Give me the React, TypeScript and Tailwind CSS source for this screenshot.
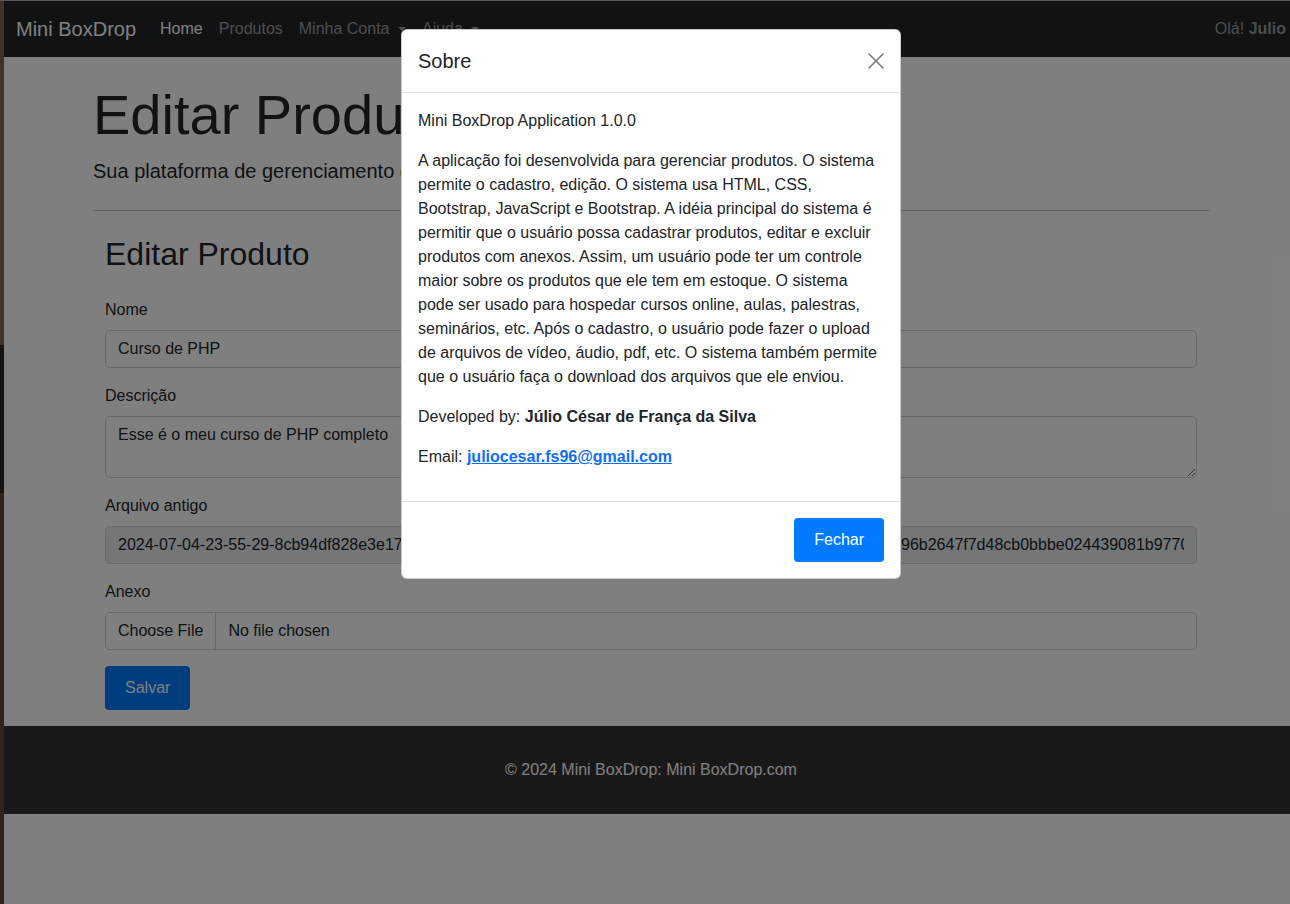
import React from "react";

const hiddenHash =
  "0a4e2b9d71e83b5d0a6e29b4d7e1a08b3d5e92a7b4e6d1038ae5b7d";
const oldFile =
  "2024-07-04-23-55-29-8cb94df828e3e17" +
  hiddenHash +
  "596b2647f7d48cb0bbbe024439081b97701a2b3c4d.pdf";

function Caret() {
  return (
    <span className="inline-block w-0 h-0 ml-[4px] align-[3px] border-x-[4.8px] border-x-transparent border-t-[4.8px] border-t-current" />
  );
}

function Label({ children }: { children: React.ReactNode }) {
  return <label className="block mb-2 leading-6 text-[16px] text-[#212529]">{children}</label>;
}

export default function App() {
  const inputCls =
    "block w-full h-[38px] px-3 py-[6px] text-[16px] leading-6 text-[#212529] bg-white border border-[#ced4da] rounded-[5px] outline-none";
  return (
    <div className="w-[1290px] h-[904px] overflow-hidden flex flex-col font-['Liberation_Sans',Arial,sans-serif] bg-[#808080]">
      <div className="h-px shrink-0 bg-[#5a5a5a]" />
      <div className="flex flex-1 min-h-0">
        <div className="w-[4px] shrink-0 flex flex-col">
          <div className="h-[344px] bg-[#3f3229]" />
          <div className="h-[148px] bg-[#161310]" />
          <div className="flex-1 bg-[#2e241d]" />
        </div>
        <div className="relative w-[1294px] shrink-0 bg-white flex flex-col">
          {/* Navbar */}
          <nav className="h-[56px] shrink-0 bg-[#212529] flex items-center px-3">
            <span className="text-[20px] leading-[30px] text-white mr-4">Mini BoxDrop</span>
            <ul className="flex items-center text-[16px] leading-6">
              <li className="px-2 text-white">Home</li>
              <li className="px-2 text-[rgba(255,255,255,0.55)]">Produtos</li>
              <li className="px-2 text-[rgba(255,255,255,0.55)]">
                Minha Conta <Caret />
              </li>
              <li className="px-2 text-[rgba(255,255,255,0.55)]">
                Ajuda <Caret />
              </li>
            </ul>
            <span className="ml-auto text-[16px] text-[rgba(255,255,255,0.55)]">
              Olá! <strong className="font-bold">Julio</strong>
            </span>
          </nav>

          {/* Main */}
          <main className="w-[1140px] mx-auto px-3 shrink-0">
            <h1 className="mt-[24px] mb-2 text-[56px] leading-[1.2] font-light text-[#212529]">
              Editar Produto
            </h1>
            <p className="text-[20px] leading-[30px] font-light text-[#212529]">
              Sua plataforma de gerenciamento de produtos.
            </p>
            <hr className="my-6 border-0 border-t border-[#bfbfbf]" />
            <div className="px-3">
              <h2 className="text-[32px] leading-[1.2] text-[#212529] mb-[24px]">Editar Produto</h2>
              <div className="mb-4">
                <Label>Nome</Label>
                <input className={inputCls} readOnly value="Curso de PHP" />
              </div>
              <div className="mb-4">
                <Label>Descrição</Label>
                <textarea
                  className="block w-full h-[62px] px-3 py-[6px] text-[16px] leading-6 text-[#212529] bg-white border border-[#ced4da] rounded-[5px] outline-none"
                  rows={2}
                  readOnly
                  value="Esse é o meu curso de PHP completo"
                />
              </div>
              <div className="mb-4">
                <Label>Arquivo antigo</Label>
                <input
                  className="block w-full h-[38px] px-3 py-[6px] text-[16px] leading-6 text-[#212529] bg-[#e9ecef] border border-[#ced4da] rounded-[5px] outline-none"
                  readOnly
                  value={oldFile}
                />
              </div>
              <div className="mb-4">
                <Label>Anexo</Label>
                <div className="flex items-stretch h-[38px] border border-[#ced4da] rounded-[5px] bg-white text-[16px] leading-6 text-[#212529]">
                  <span className="flex items-center px-3 border-r border-[#ced4da]">Choose File</span>
                  <span className="flex items-center px-3">No file chosen</span>
                </div>
              </div>
              <button className="h-[44px] px-5 rounded-[4px] bg-[#007bff] text-white text-[16px]">Salvar</button>
            </div>
          </main>

          {/* Footer */}
          <footer className="mt-[16px] h-[88px] shrink-0 bg-[#333333] flex items-center justify-center text-white text-[16px]">
            © 2024 Mini BoxDrop: Mini BoxDrop.com
          </footer>
          <div className="flex-1" />

          {/* Modal backdrop */}
          <div className="absolute inset-0 bg-black/50">
            <div className="mx-auto mt-[28px] w-[500px] bg-white rounded-[6px] border border-black/20 text-[#212529]">
              <div className="flex items-center justify-between p-4 border-b border-[#dee2e6]">
                <h5 className="text-[20px] leading-[30px] font-normal">Sobre</h5>
                <svg width="16" height="16" viewBox="0 0 16 16" className="opacity-50">
                  <path d="M1 1 L15 15 M15 1 L1 15" stroke="#000" strokeWidth="1.6" strokeLinecap="round" />
                </svg>
              </div>
              <div className="p-4 text-[16px] leading-6">
                <p className="mb-4">Mini BoxDrop Application 1.0.0</p>
                <p className="mb-4 whitespace-nowrap">
                  A aplicação foi desenvolvida para gerenciar produtos. O sistema
                  <br />
                  permite o cadastro, edição. O sistema usa HTML, CSS,
                  <br />
                  Bootstrap, JavaScript e Bootstrap. A idéia principal do sistema é
                  <br />
                  permitir que o usuário possa cadastrar produtos, editar e excluir
                  <br />
                  produtos com anexos. Assim, um usuário pode ter um controle
                  <br />
                  maior sobre os produtos que ele tem em estoque. O sistema
                  <br />
                  pode ser usado para hospedar cursos online, aulas, palestras,
                  <br />
                  seminários, etc. Após o cadastro, o usuário pode fazer o upload
                  <br />
                  de arquivos de vídeo, áudio, pdf, etc. O sistema também permite
                  <br />
                  que o usuário faça o download dos arquivos que ele enviou.
                </p>
                <p className="mb-4">
                  Developed by: <strong className="font-bold">Júlio César de França da Silva</strong>
                </p>
                <p className="mb-4">
                  Email:{" "}
                  <a className="font-bold underline text-[#0d6efd]" href="#">
                    juliocesar.fs96@gmail.com
                  </a>
                </p>
              </div>
              <div className="flex justify-end p-4 border-t border-[#dee2e6]">
                <button className="h-[44px] px-5 rounded-[4px] bg-[#007bff] text-white text-[16px]">Fechar</button>
              </div>
            </div>
          </div>
        </div>
      </div>
    </div>
  );
}
